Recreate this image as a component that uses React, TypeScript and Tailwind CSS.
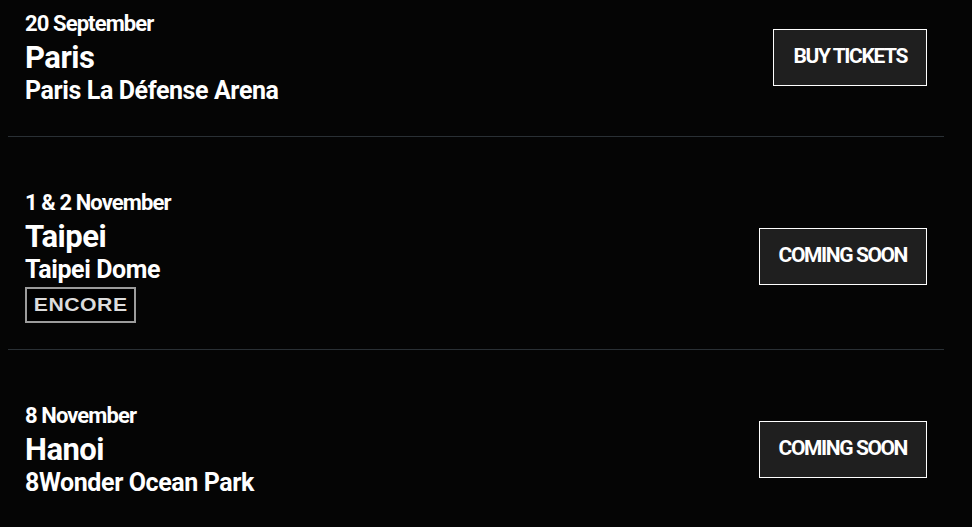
import React from 'react';

type Show = {
  date: string;
  city: string;
  venue: string;
  action: string;
  encore?: boolean;
};

const shows: Show[] = [
  { date: '20 September', city: 'Paris', venue: 'Paris La Défense Arena', action: 'BUY TICKETS' },
  { date: '1 & 2 November', city: 'Taipei', venue: 'Taipei Dome', action: 'COMING SOON', encore: true },
  { date: '8 November', city: 'Hanoi', venue: '8Wonder Ocean Park', action: 'COMING SOON' },
];

function ShowRow({ show, first }: { show: Show; first: boolean }) {
  return (
    <div
      className={`flex items-center justify-between px-[17px] border-b border-[#2a3035] ${
        first ? 'pt-[10px]' : 'pt-[52px]'
      } ${show.encore ? 'pb-[26px]' : 'pb-[32px]'}`}
    >
      <div className="flex flex-col items-start text-white">
        <p className="text-[22px] leading-[28px] font-bold tracking-[-0.9px]">{show.date}</p>
        <h2 className="text-[31px] leading-[40px] font-bold tracking-[-0.5px]">{show.city}</h2>
        <p className="text-[25px] leading-[26px] font-bold tracking-[-0.4px]">{show.venue}</p>
        {show.encore && (
          <div className="mt-[4px] w-[111px] h-[36px] flex items-center justify-center border-2 border-[#9c9c9c] bg-black">
            <span className="block font-['Liberation_Sans',sans-serif] font-bold text-[18px] leading-none tracking-[0.4px] scale-x-[1.18] text-[#dcdcdc]">
              ENCORE
            </span>
          </div>
        )}
      </div>
      <button className="h-[57px] px-[19px] border border-white bg-[#1f1f1f] text-white text-[21px] font-bold tracking-[-1.4px]">
        {show.action}
      </button>
    </div>
  );
}

export default function App() {
  return (
    <div className="min-h-screen bg-[#050505] font-['Roboto',sans-serif]">
      <div className="ml-[8px] w-[936px]">
        {shows.map((show, i) => (
          <ShowRow key={show.city} show={show} first={i === 0} />
        ))}
      </div>
    </div>
  );
}
